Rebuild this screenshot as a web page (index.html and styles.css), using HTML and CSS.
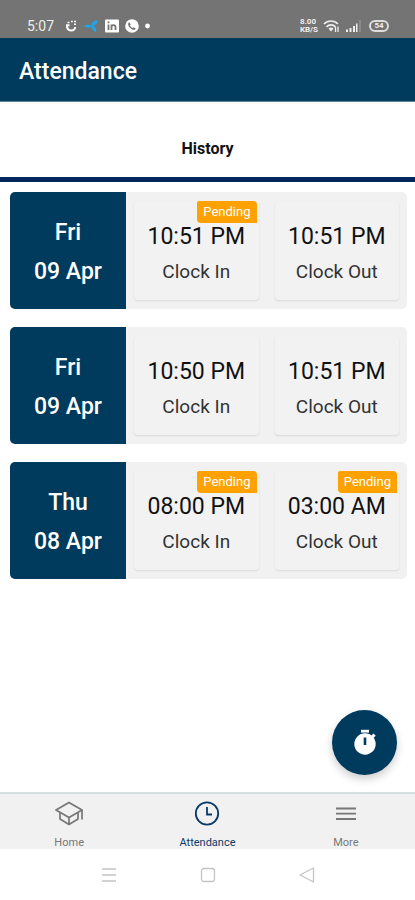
FILE: index.html
```html
<!DOCTYPE html>
<html lang="en">
<head>
<meta charset="utf-8">
<meta name="viewport" content="width=device-width, initial-scale=1">
<title>Attendance</title>
<link rel="stylesheet" href="styles.css">
</head>
<body>
<div class="status">
  <div class="status-group">
    <span class="status-time">5:07</span>
    <svg width="12" height="14" viewBox="0 0 12 14" fill="none" stroke="#fff" stroke-width="2"><path d="M4.500 6.200H2c-.3 3.500 1.500 5.300 4 5.300 2.400 0 4-1.400 4.200-3.500"/><path d="M2.500 3.500h2M6 2.500h1.800M9 2.500h2M9 5.200h2" stroke-width="1.500"/></svg>
    <svg width="16" height="14" viewBox="0 0 16 14" fill="#1ba8ea"><path d="M9 7.500C7 5 2 5 1 7.500c2.500 1.200 5.500 1.200 8 0z"/><path d="M8 6.800C8.500 3.500 11.500 1 14.500 1.500 15 4.500 11.500 7 8 6.800z"/><path d="M8.500 6.500c3 .5 5.500 3 4.500 6.500-2.500-.5-4.500-3-4.500-6.500z"/></svg>
    <svg width="14" height="14" viewBox="0 0 14 14"><rect width="14" height="13" y=".5" rx="1" fill="#fff"/><g stroke="#747474" stroke-width="1.800" fill="none"><path d="M3.500 5.500V11M3.500 2.500v1.700M6.500 5.500V11M6.500 8c0-2.500 4-2.500 4 0v3"/></g></svg>
    <svg width="14" height="14" viewBox="0 0 14 14"><circle cx="7" cy="7" r="6.800" fill="#fff"/><path d="M4.200 3.200l1.500 2-.7 1.200c.5 1.100 1.300 1.900 2.500 2.500L8.700 8.200l2 1.300c-.5 1.600-2 1.800-3.500 1C5.300 9.500 4 8 3.300 6.300c-.4-1.300 0-2.500.9-3.100z" fill="#747474"/></svg>
    <svg width="5" height="14" viewBox="0 0 5 14"><circle cx="2.500" cy="7" r="2.400" fill="#fff"/></svg>
  </div>
  <div class="status-group status-right">
    <span class="speed"><span>8.00</span><span>KB/S</span></span>
    <svg width="17" height="14" viewBox="0 0 17 14" fill="none" stroke="#eee" stroke-width="1.700"><path d="M1 5c4-4 10-4 14 0M3.500 7.800c2.500-2.600 6.500-2.600 9 0"/><path d="M5.500 9.500c1.500-1.300 3.500-1.300 5 0L8 12.500z" fill="#eee" stroke="none"/><path d="M12.500 8v5M15 7.500v5.500" stroke-width="1.300"/></svg>
    <svg width="16" height="14" viewBox="0 0 16 14" fill="#eee"><path d="M1 10.500h2V13H1zM4.500 9h2v4h-2zM8 7h2v6H8zM11 4.500h1.500V13H11z"/><path d="M14.500 1h1v12h-1z" opacity=".4"/></svg>
    <span class="battery">54</span>
  </div>
</div>

<header class="appbar"><h1>Attendance</h1></header>
<div class="tabs"><button class="tab" type="button">History</button></div>

<main class="content">
  <article class="card">
    <div class="date"><span>Fri</span><span>09 Apr</span></div>
    <div class="times">
      <div class="tile"><span class="badge">Pending</span><span class="time">10:51 PM</span><span class="label">Clock In</span></div>
      <div class="tile"><span class="time">10:51 PM</span><span class="label">Clock Out</span></div>
    </div>
  </article>
  <article class="card">
    <div class="date"><span>Fri</span><span>09 Apr</span></div>
    <div class="times">
      <div class="tile"><span class="time">10:50 PM</span><span class="label">Clock In</span></div>
      <div class="tile"><span class="time">10:51 PM</span><span class="label">Clock Out</span></div>
    </div>
  </article>
  <article class="card">
    <div class="date"><span>Thu</span><span>08 Apr</span></div>
    <div class="times">
      <div class="tile"><span class="badge">Pending</span><span class="time">08:00 PM</span><span class="label">Clock In</span></div>
      <div class="tile"><span class="badge">Pending</span><span class="time">03:00 AM</span><span class="label">Clock Out</span></div>
    </div>
  </article>
  <button class="fab" type="button" aria-label="Start timer">
    <svg width="24" height="28" viewBox="0 0 24 28"><path d="M8 .8h8v2.800H8z" fill="#fff"/><circle cx="12" cy="15" r="10.700" fill="#fff"/><path d="M18 7l2.500-2.500 2.200 2.200-2.500 2.500z" fill="#fff"/><path d="M12 8.500v7.500" stroke="#003a5d" stroke-width="2.600"/></svg>
  </button>
</main>

<nav class="bottom">
  <a href="#home">
    <svg width="28" height="26" viewBox="0 0 28 26" fill="none" stroke="#777" stroke-width="1.700" stroke-linejoin="round"><path d="M14 1.500L1 9l13 7.500L27 9z"/><path d="M5 11.500V18l9 5.500 9-5.500v-6.500M14 16.500v7M27 9v9.500"/></svg>
    <span>Home</span>
  </a>
  <a class="active" href="#attendance">
    <svg width="26" height="26" viewBox="0 0 26 26" fill="none" stroke="#0b3a66" stroke-width="1.800"><circle cx="13" cy="12.500" r="11.200"/><path d="M13 6v7.500h5"/></svg>
    <span>Attendance</span>
  </a>
  <a href="#more">
    <svg width="22" height="26" viewBox="0 0 22 26" stroke="#777" stroke-width="1.800"><path d="M1 7.500h20M1 12.700h20M1 18h20"/></svg>
    <span>More</span>
  </a>
</nav>

<div class="system">
  <button type="button" aria-label="Recent apps"><svg width="16" height="16" viewBox="0 0 16 16" stroke="#c4c4c4" stroke-width="1.300"><path d="M1 2h14M1 8h14M1 14h14"/></svg></button>
  <button type="button" aria-label="Home screen"><svg width="16" height="16" viewBox="0 0 16 16" fill="none" stroke="#c4c4c4" stroke-width="1.300"><rect x="1.500" y="1.500" width="13" height="13" rx="2.500"/></svg></button>
  <button type="button" aria-label="Back"><svg width="16" height="16" viewBox="0 0 16 16" fill="none" stroke="#c4c4c4" stroke-width="1.300" stroke-linejoin="round"><path d="M14.500 1v14L1 8z"/></svg></button>
</div>
</body>
</html>
```
FILE: styles.css
```css
* { box-sizing: border-box; }
body {
  margin: 0;
  min-height: 100vh;
  display: flex;
  flex-direction: column;
  background: #fff;
  color: #111;
  font-family: Roboto, "Liberation Sans", sans-serif;
}
button { border: 0; padding: 0; background: none; font: inherit; color: inherit; }
svg { display: block; }

.status {
  display: flex;
  justify-content: space-between;
  height: 38px;
  padding: 14px 26px 0 27px;
  background: #747474;
  color: #eee;
}
.status-group { display: flex; align-items: center; gap: 6px; height: 24px; }
.status-time { font-size: 14px; margin-right: 5px; }
.speed { display: flex; flex-direction: column; font-size: 8px; line-height: 8px; font-weight: 700; }
.status-right { gap: 5px; }
.battery {
  width: 20px;
  margin-left: 3px;
  border: 2px solid #ddd;
  border-radius: 6px;
  font-size: 8px;
  line-height: 8px;
  font-weight: 700;
  text-align: center;
}

.appbar {
  display: flex;
  align-items: center;
  height: 64px;
  padding: 4px 20px 0 19px;
  background: #003a5d;
  border-bottom: 1px solid #5f8299;
  color: #fff;
}
.appbar h1 { margin: 0; font-size: 23px; font-weight: 500; }

.tabs { height: 80px; display: flex; border-bottom: 5px solid #00285a; }
.tab { flex: 1; padding-top: 17px; font-size: 16px; font-weight: 700; }

.content {
  position: relative;
  flex: 1;
  display: flex;
  flex-direction: column;
  gap: 18px;
  padding: 10px 8px 18px 10px;
}
.card {
  display: flex;
  min-height: 117px;
  border-radius: 5px;
  background: #f1f1f1;
  overflow: hidden;
}
.date {
  width: 116px;
  display: flex;
  flex-direction: column;
  align-items: center;
  justify-content: center;
  gap: 11px;
  padding-top: 4px;
  background: #003a5d;
  color: #fff;
  font-size: 23px;
  font-weight: 500;
  line-height: 28px;
}
.times {
  flex: 1;
  display: grid;
  grid-template-columns: 1fr 1fr;
  gap: 16px;
  padding: 9px 8px;
}
.tile {
  position: relative;
  display: flex;
  flex-direction: column;
  align-items: center;
  padding-top: 22px;
  gap: 9px;
  border-radius: 4px;
  background: #f2f2f2;
  box-shadow: 0 1px 2px rgba(0, 0, 0, .1);
}
.time { font-size: 23px; line-height: 28px; white-space: nowrap; }
.label { font-size: 19px; line-height: 24px; color: #333; white-space: nowrap; }
.badge {
  position: absolute;
  top: 0;
  right: 2px;
  padding: 0 6px;
  border-radius: 2px 4px 0 4px;
  background: #ffa200;
  color: #fff;
  font-size: 13px;
  line-height: 22px;
}
.fab {
  position: absolute;
  right: 18px;
  bottom: 17px;
  width: 65px;
  height: 65px;
  display: grid;
  place-items: center;
  border-radius: 50%;
  background: #003a5d;
  box-shadow: 0 4px 8px rgba(0, 0, 0, .2);
}

.bottom {
  display: grid;
  grid-template-columns: repeat(3, 1fr);
  height: 57px;
  border-top: 2px solid #d5dfdf;
  background: #f1f1f1;
}
.bottom a {
  display: flex;
  flex-direction: column;
  align-items: center;
  gap: 9px;
  padding-top: 7px;
  color: #777;
  font-size: 11px;
  line-height: 14px;
  text-decoration: none;
}
.bottom .active { color: #0b3a66; }
.system {
  display: flex;
  justify-content: center;
  gap: 83px;
  height: 51px;
}
```
